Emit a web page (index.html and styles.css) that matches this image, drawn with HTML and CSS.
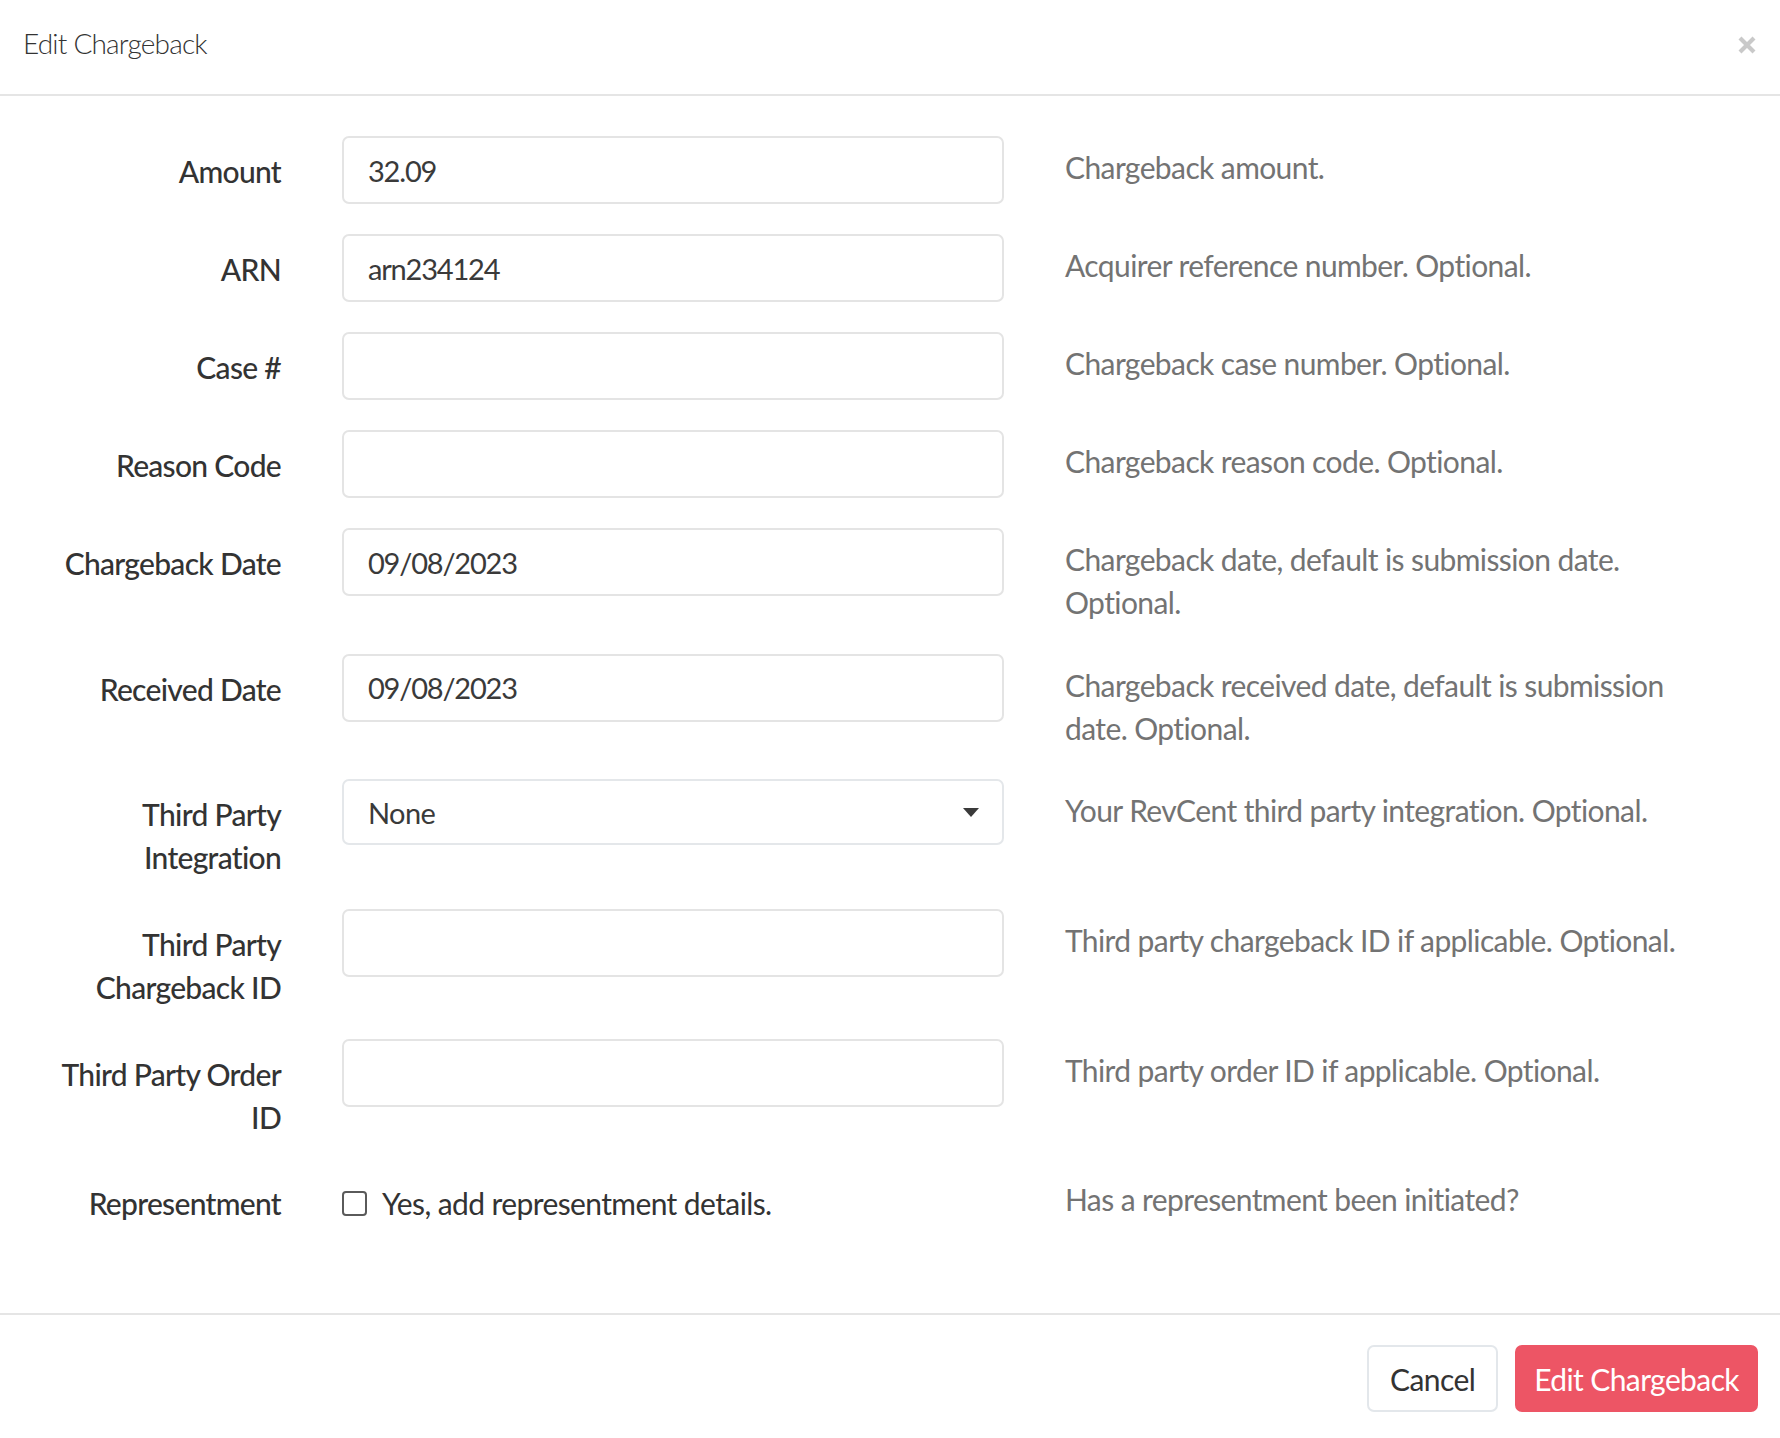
FILE: index.html
```html
<!DOCTYPE html>
<html lang="en">
<head>
<meta charset="utf-8">
<title>Edit Chargeback</title>
<link rel="stylesheet" href="styles.css">
</head>
<body>
<div class="modal">
  <div class="modal-header">
    <h4 class="modal-title">Edit Chargeback</h4>
    <button class="close" type="button" aria-label="Close">
      <svg width="18" height="18" viewBox="0 0 18 18"><path d="M2 2 L16 16 M16 2 L2 16" stroke="#c9c9c9" stroke-width="4.2" fill="none"/></svg>
    </button>
  </div>
  <form class="modal-body">
    <div class="form-group">
      <label class="control-label">Amount</label>
      <div class="control"><input class="form-control" type="text" value="32.09"></div>
      <p class="help-block">Chargeback amount.</p>
    </div>
    <div class="form-group">
      <label class="control-label">ARN</label>
      <div class="control"><input class="form-control" type="text" value="arn234124"></div>
      <p class="help-block">Acquirer reference number. Optional.</p>
    </div>
    <div class="form-group">
      <label class="control-label">Case #</label>
      <div class="control"><input class="form-control" type="text" value=""></div>
      <p class="help-block">Chargeback case number. Optional.</p>
    </div>
    <div class="form-group">
      <label class="control-label">Reason Code</label>
      <div class="control"><input class="form-control" type="text" value=""></div>
      <p class="help-block">Chargeback reason code. Optional.</p>
    </div>
    <div class="form-group">
      <label class="control-label">Chargeback Date</label>
      <div class="control"><input class="form-control" type="text" value="09/08/2023"></div>
      <p class="help-block">Chargeback date, default is submission date.<br>Optional.</p>
    </div>
    <div class="form-group">
      <label class="control-label">Received Date</label>
      <div class="control"><input class="form-control" type="text" value="09/08/2023"></div>
      <p class="help-block">Chargeback received date, default is submission<br>date. Optional.</p>
    </div>
    <div class="form-group">
      <label class="control-label">Third Party<br>Integration</label>
      <div class="control select-wrap">
        <select class="form-control select"><option>None</option></select>
        <svg class="caret" width="16" height="9" viewBox="0 0 16 9"><path d="M0 0 H16 L8 9 Z" fill="#3a3a3a"/></svg>
      </div>
      <p class="help-block">Your RevCent third party integration. Optional.</p>
    </div>
    <div class="form-group">
      <label class="control-label">Third Party<br>Chargeback ID</label>
      <div class="control"><input class="form-control" type="text" value=""></div>
      <p class="help-block">Third party chargeback ID if applicable. Optional.</p>
    </div>
    <div class="form-group">
      <label class="control-label">Third Party Order<br>ID</label>
      <div class="control"><input class="form-control" type="text" value=""></div>
      <p class="help-block">Third party order ID if applicable. Optional.</p>
    </div>
    <div class="form-group last">
      <label class="control-label">Representment</label>
      <div class="control checkbox">
        <label class="check-label"><input class="check" type="checkbox"> Yes, add representment details.</label>
      </div>
      <p class="help-block">Has a representment been initiated?</p>
    </div>
  </form>
  <div class="modal-footer">
    <button class="btn btn-default" type="button">Cancel</button>
    <button class="btn btn-danger" type="button">Edit Chargeback</button>
  </div>
</div>
</body>
</html>
```

FILE: styles.css
```css
* { box-sizing: border-box; }

html, body {
  margin: 0;
  padding: 0;
  background: #ffffff;
}

body {
  font-family: Lato, "Open Sans", sans-serif;
  font-size: 30px;
  line-height: 1.42857;
  letter-spacing: -0.6px;
  color: #333333;
}

.modal {
  width: 1780px;
}

.modal-header {
  height: 96px;
  border-bottom: 2px solid #e5e5e5;
  padding: 0 24px 6px 23px;
  display: flex;
  align-items: center;
  justify-content: space-between;
}

.modal-title {
  margin: 0;
  font-size: 28px;
  font-weight: 300;
  line-height: 1.2;
  letter-spacing: -0.8px;
  color: #333333;
}

.close {
  border: 0;
  background: transparent;
  padding: 0;
  width: 18px;
  height: 18px;
  margin-top: 2px;
  display: flex;
  cursor: pointer;
}

.modal-body {
  display: block;
  padding: 40px 0 58px 0;
  margin: 0;
}

.form-group {
  display: grid;
  grid-template-columns: 251px 662px 662px;
  column-gap: 61px;
  padding-left: 30px;
  margin-bottom: 30px;
  align-items: start;
}

.control-label {
  padding-top: 14px;
  text-align: right;
  font-weight: 500;
  letter-spacing: -0.7px;
  color: #333333;
  white-space: nowrap;
}

.control {
  position: relative;
}

.form-control {
  display: block;
  width: 100%;
  height: 68px;
  padding: 0 24px;
  font-family: inherit;
  font-size: 29px;
  letter-spacing: -1.2px;
  color: #3a3a3a;
  background: #ffffff;
  border: 2px solid #e4e4e4;
  border-radius: 7px;
  outline: none;
}

.select {
  appearance: none;
  -webkit-appearance: none;
  border-color: #e4e7ea;
  height: 66px;
  letter-spacing: -0.6px;
}

.caret {
  position: absolute;
  right: 25px;
  top: 29px;
}

.help-block {
  margin: 10px 0 0 0;
  color: #737373;
  white-space: nowrap;
}

.checkbox {
  padding-top: 14px;
}

.check-label {
  display: flex;
  align-items: center;
  gap: 15px;
  font-weight: 400;
  color: #333333;
  white-space: nowrap;
}

.check {
  appearance: none;
  -webkit-appearance: none;
  width: 25px;
  height: 25px;
  margin: 0;
  border: 2px solid #5a5a5a;
  border-radius: 4px;
  background: #ffffff;
  flex: none;
}

.modal-footer {
  border-top: 2px solid #e5e5e5;
  padding: 30px 22px 30px 22px;
  display: flex;
  justify-content: flex-end;
  gap: 17px;
}

.btn {
  height: 67px;
  padding: 0 21px;
  font-family: inherit;
  font-size: 30px;
  line-height: 1;
  letter-spacing: -0.6px;
  border-radius: 7px;
  cursor: pointer;
}

.btn-default {
  background: #ffffff;
  color: #333333;
  border: 2px solid #e3e7eb;
}

.btn-danger {
  background: #ed5565;
  color: #ffffff;
  border: 2px solid #ed5565;
  padding: 0 17px;
}
```
